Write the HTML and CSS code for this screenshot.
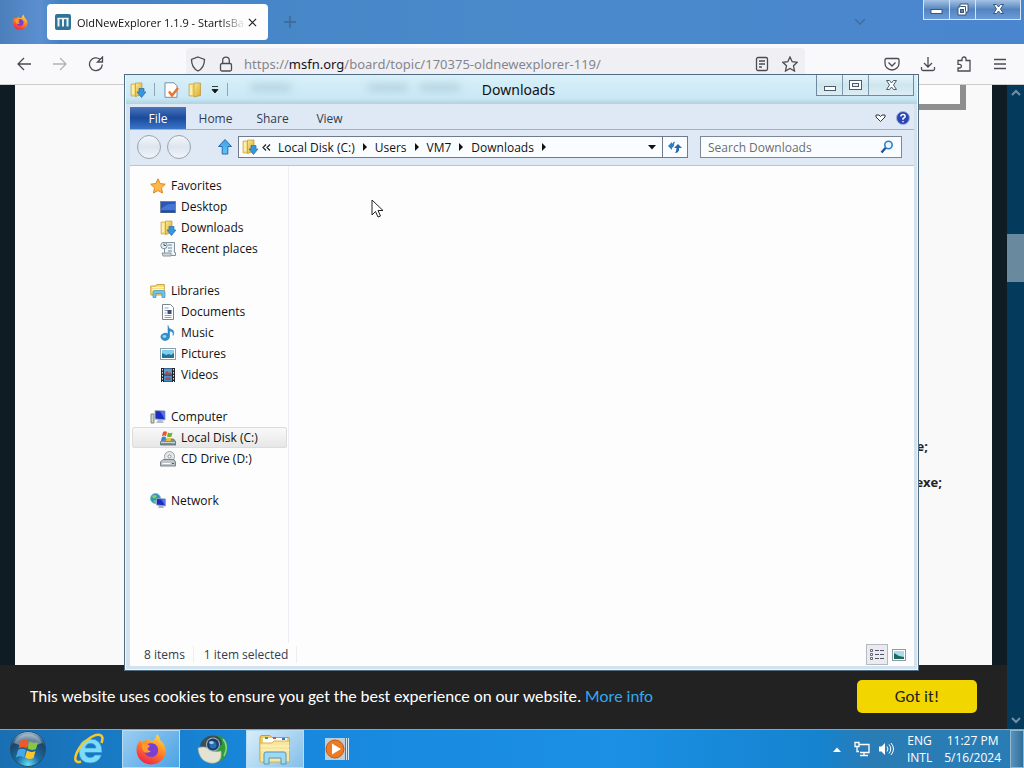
FILE: index.html
```
<!DOCTYPE html>
<html lang="en">
<head>
    <meta charset="UTF-8">
    <meta name="viewport" content="width=device-width, initial-scale=1.0">
    <title>Downloads</title>
    <link rel="stylesheet" href="styles.css">
</head>

<body>

    <!-- shared icons -->
    <svg class="defs" width="0" height="0" aria-hidden="true">
        <defs>
            <linearGradient id="gold" x1="0" y1="0" x2="1" y2="1">
                <stop offset="0" stop-color="#fbe98a"/>
                <stop offset="1" stop-color="#dba62c"/>
            </linearGradient>
            <linearGradient id="sky" x1="0" y1="0" x2="0" y2="1">
                <stop offset="0" stop-color="#3f9fe8"/>
                <stop offset="1" stop-color="#5cc8f8"/>
            </linearGradient>
            <linearGradient id="fox" x1="0.8" y1="0" x2="0.3" y2="1">
                <stop offset="0" stop-color="#ffe14a"/>
                <stop offset="0.45" stop-color="#ff8a24"/>
                <stop offset="1" stop-color="#f0204c"/>
            </linearGradient>
            <radialGradient id="orb" cx="0.5" cy="0.95" r="0.95">
                <stop offset="0" stop-color="#5fe0f5"/>
                <stop offset="0.35" stop-color="#1b6ea3"/>
                <stop offset="0.75" stop-color="#1b4468"/>
                <stop offset="1" stop-color="#a9c4d6"/>
            </radialGradient>
            <symbol id="i-folder" viewBox="0 0 16 16">
                <path d="M2 2h6l1 12H2z" fill="#f5da78" stroke="#c99c2e" stroke-width=".6"/>
                <path d="M7 1h6.500v12.500L7 15z" fill="url(#gold)" stroke="#b98a22" stroke-width=".6"/>
                <path d="M4 3v10" stroke="#fffbe0" stroke-width="1.200"/>
            </symbol>
            <symbol id="i-downloads" viewBox="0 0 16 16">
                <path d="M1 2h5l1 12H1z" fill="#f5da78" stroke="#c99c2e" stroke-width=".6"/>
                <path d="M5.500 1H12v11.500L5.500 14.500z" fill="url(#gold)" stroke="#b98a22" stroke-width=".6"/>
                <path d="M3 3v9" stroke="#fffbe0" stroke-width="1.200"/>
                <path d="M9 6.500h5V10h2l-4.500 5.500L7 10h2z" fill="#3299de" stroke="#2a6aad" stroke-width=".7"/>
            </symbol>
            <symbol id="i-firefox" viewBox="0 0 32 32">
                <path d="M22 1c2 2 3 4 3 6 4 3 6 7 5.500 12C30 26 24 31.500 16 31.500S1.500 25 1.500 17c0-4 1.500-7.500 4-10l1 3c1.500-1.500 3-2.500 5-3l1-2c1 2 3 3 5 3 2-1 4-4 4.500-7z" fill="url(#fox)"/>
                <path d="M11 12c4-3 10-2 11.500 2 2 5-1 10-6 10-4 0-7-3-7-6 2 1 4 1 6 0-3 0-4-1-5-2l3-2z" fill="#7a3fd0"/>
                <path d="M7 10c3 0 6 1 8 3l-2 2c-1 1 0 3 3 3-2 2-5 2-7 1-2-3-3-6-2-9z" fill="#ff9a2a"/>
            </symbol>
        </defs>
    </svg>

    <main class="browser">
        <header class="tabs">
            <svg class="pinned" viewBox="0 0 32 32" width="16" height="16"><use href="#i-firefox"/></svg>
            <div class="tab">
                <svg viewBox="0 0 16 16" width="16" height="16">
                    <rect width="16" height="16" rx="2" fill="#2f7396"/>
                    <path d="M3.500 12.500V4M8 12.500V4M12.500 12.500V4" fill="none" stroke="#e8f4f9" stroke-width="2"/>
                    <path d="M2.500 4.500h11" stroke="#e8f4f9" stroke-width="1.500"/>
                </svg>
                <span class="tab-title">OldNewExplorer 1.1.9 - StartIsBa</span>
                <button class="icon-button" aria-label="Close tab">
                    <svg viewBox="0 0 10 10" width="9" height="9"><path d="M1 1l8 8M9 1L1 9" stroke="#222" stroke-width="1.300"/></svg>
                </button>
            </div>
            <button class="icon-button new-tab" aria-label="New tab">
                <svg viewBox="0 0 14 14" width="14" height="14"><path d="M7 1v12M1 7h12" stroke="#3d6690" stroke-width="1.300"/></svg>
            </button>
            <button class="icon-button all-tabs" aria-label="List all tabs">
                <svg viewBox="0 0 12 8" width="12" height="8"><path d="M1 1l5 5 5-5" fill="none" stroke="#4170a3" stroke-width="1.600"/></svg>
            </button>
            <div class="controls browser-controls">
                <button aria-label="Minimize"><svg viewBox="0 0 13 13" width="13" height="13"><rect x="1" y="6.500" width="11" height="4" fill="#fff" stroke="#39557c"/></svg></button>
                <button aria-label="Restore"><svg viewBox="0 0 13 13" width="13" height="13"><path d="M4 1h8v8h-2v3H2V4h2z" fill="#fff" stroke="#39557c"/><path d="M4.500 3.500h5v5" fill="none" stroke="#39557c"/><rect x="4.500" y="6.500" width="3" height="3" fill="#5b86bb" stroke="#39557c"/></svg></button>
                <button class="wide" aria-label="Close"><svg viewBox="0 0 13 13" width="13" height="13"><path d="M1.500 1.500h3l2 2.500 2-2.500h3L8.500 6l3 4.500h-3l-2-2.500-2 2.500h-3l3-4.500z" fill="#fff" stroke="#39557c"/></svg></button>
            </div>
        </header>

        <nav class="toolbar">
            <button class="icon-button" aria-label="Back"><svg viewBox="0 0 16 16" width="16" height="16"><path d="M15 8H2M8 2L2 8l6 6"/></svg></button>
            <button class="icon-button faded" aria-label="Forward"><svg viewBox="0 0 16 16" width="16" height="16"><path d="M1 8h13M8 2l6 6-6 6"/></svg></button>
            <button class="icon-button" aria-label="Reload"><svg viewBox="0 0 16 16" width="16" height="16"><path d="M14.300 8.500A6.400 6.400 0 1 1 12 3.300M14.500 1v5H9.500z"/></svg></button>
            <div class="url-bar">
                <svg viewBox="0 0 16 16" width="16" height="16"><path d="M8 1l6.500 2.500C14.500 9 12 13 8 15 4 13 1.500 9 1.500 3.500z"/></svg>
                <svg viewBox="0 0 16 16" width="16" height="16"><rect x="2.500" y="7.500" width="11" height="7.500" rx="1.500"/><path d="M4.700 7V4.500a3.300 3.300 0 0 1 6.600 0V7"/></svg>
                <span class="url">https://<b>msfn.org</b>/board/topic/170375-oldnewexplorer-119/</span>
                <button class="icon-button" aria-label="Reader view"><svg viewBox="0 0 16 16" width="16" height="16"><rect x="2.500" y="1.500" width="11" height="13" rx="1.500"/><path d="M5 5h6M5 8h6M5 11h3"/></svg></button>
                <button class="icon-button" aria-label="Bookmark"><svg viewBox="0 0 16 16" width="16" height="16"><path d="M8 1l2.200 4.700 5 .6-3.700 3.500 1 5.200L8 12.500 3.500 15l1-5.200L.8 6.300l5-.6z"/></svg></button>
            </div>
            <div class="tools">
                <button class="icon-button" aria-label="Pocket"><svg viewBox="0 0 16 16" width="16" height="16"><path d="M2.500 2.500h11q1.500 0 1.500 1.500v3.500a7 6.500 0 0 1-14 0V4q0-1.500 1.500-1.500zM4.500 6.500L8 10l3.500-3.500"/></svg></button>
                <button class="icon-button" aria-label="Downloads"><svg viewBox="0 0 16 16" width="16" height="16"><path d="M8 1v9.500M4 7l4 4 4-4M1.500 11v2q0 1.500 1.500 1.500h10q1.500 0 1.500-1.500v-2"/></svg></button>
                <button class="icon-button" aria-label="Extensions"><svg viewBox="0 0 16 16" width="16" height="16"><path d="M2 4.500h4V3a2 2 0 0 1 4 0v1.500h4v10.500H2v-3h1.500a1.800 1.800 0 0 0 0-3.700H2z"/></svg></button>
                <button class="icon-button" aria-label="Menu"><svg viewBox="0 0 16 16" width="16" height="16"><path d="M2 3.500h12M2 8h12M2 12.500h12"/></svg></button>
            </div>
        </nav>

        <div class="page">
            <div class="page-main">
                <article class="post">
                    <div class="quote-box"></div>
                    <p>e;</p>
                    <p class="second">exe;</p>
                </article>
                <div class="cookies">
                    <p>This website uses cookies to ensure you get the best experience on our website. <a href="#">More info</a></p>
                    <button>Got it!</button>
                </div>
            </div>
            <div class="scrollbar">
                <svg viewBox="0 0 10 8" width="10" height="8"><path d="M1 6l4-4 4 4" fill="none" stroke="#6f90a5" stroke-width="2"/></svg>
                <div class="thumb"></div>
                <svg viewBox="0 0 10 8" width="10" height="8"><path d="M1 2l4 4 4-4" fill="none" stroke="#6f90a5" stroke-width="2"/></svg>
            </div>
        </div>
    </main>

    <section class="explorer">
        <header class="title-bar">
            <div class="quick">
                <svg width="16" height="16"><use href="#i-downloads"/></svg>
                <i class="bar"></i>
                <button class="icon-button" aria-label="Properties">
                    <svg viewBox="0 0 16 16" width="16" height="16"><path d="M2 .8h9l3 3v11.500H2z" fill="#fff" stroke="#7d8ba8"/><path d="M6 9.500l3 4L15 6" fill="none" stroke="#e8762d" stroke-width="2.500"/></svg>
                </button>
                <button class="icon-button" aria-label="New folder"><svg width="16" height="16"><use href="#i-folder"/></svg></button>
                <button class="icon-button" aria-label="Customize"><svg viewBox="0 0 8 8" width="8" height="8"><path d="M1 .5h6M1 3.500h6L4 7z" fill="#111" stroke="#111" stroke-width=".8"/></svg></button>
                <i class="bar"></i>
            </div>
            <div class="smudges"><i></i><i></i><i></i></div>
            <h1>Downloads</h1>
            <div class="controls">
                <button aria-label="Minimize"><svg viewBox="0 0 13 13" width="13" height="13"><rect x="1.500" y="7.500" width="11" height="4" fill="#fff" stroke="#4d5c6c"/></svg></button>
                <button aria-label="Maximize"><svg viewBox="0 0 13 13" width="13" height="13"><rect x=".5" y="1.500" width="12" height="9" fill="#fff" stroke="#4d5c6c"/><rect x="3.500" y="4.500" width="6" height="3" fill="#e6f0f5" stroke="#4d5c6c"/></svg></button>
                <button class="wide" aria-label="Close"><svg viewBox="0 0 13 13" width="13" height="13"><path d="M1.500 1.500h3l2 2.500 2-2.500h3L8.500 6l3 4.500h-3l-2-2.500-2 2.500h-3l3-4.500z" fill="#fff" stroke="#4d5c6c"/></svg></button>
            </div>
        </header>

        <div class="ribbon">
            <button class="file">File</button>
            <button>Home</button>
            <button>Share</button>
            <button>View</button>
            <div class="ribbon-end">
                <button class="icon-button" aria-label="Expand ribbon"><svg viewBox="0 0 11 9" width="11" height="9"><path d="M1 1h3l1.500 1.500L7 1h3v2L5.500 7.500 1 3z" fill="#fff" stroke="#333"/></svg></button>
                <button class="icon-button" aria-label="Help"><svg viewBox="0 0 14 14" width="14" height="14"><circle cx="7" cy="7" r="6.500" fill="#2b46b4" stroke="#9fb0e0"/><path d="M4.800 5.500Q5 3.500 7 3.500t2.200 1.700Q9.200 6.500 7 7.500v1.200M7 10v1.300" fill="none" stroke="#fff" stroke-width="1.500"/></svg></button>
            </div>
        </div>

        <div class="address-row">
            <button class="round" aria-label="Back"></button>
            <button class="round" aria-label="Forward"></button>
            <button class="icon-button up" aria-label="Up">
                <svg viewBox="0 0 16 18" width="16" height="18"><path d="M8 1.500l6.500 7h-3.700V16H5.200V8.500H1.500z" fill="url(#sky)" stroke="#2767b5"/></svg>
            </button>
            <div class="address">
                <svg width="16" height="16"><use href="#i-downloads"/></svg>
                <svg class="chevrons" viewBox="0 0 9 7" width="9" height="7"><path d="M4 .5l-3 3 3 3M8 .5l-3 3 3 3" fill="none" stroke="#222" stroke-width="1.200"/></svg>
                <a href="#">Local Disk (C:)</a><i class="arrow"></i>
                <a href="#">Users</a><i class="arrow"></i>
                <a href="#">VM7</a><i class="arrow"></i>
                <a href="#">Downloads</a><i class="arrow"></i>
                <button class="drop" aria-label="Previous locations"><svg viewBox="0 0 8 5" width="8" height="5"><path d="M0 0h8L4 4.500z" fill="#111"/></svg></button>
                <button class="refresh" aria-label="Refresh">
                    <svg viewBox="0 0 16 14" width="16" height="14"><path d="M1 6l4-4v2q1-2.500 3-2.500-1 2-1 4.500l-2 2v2z" fill="#2e7fc0"/><path d="M15 8l-4-4-4 4h2.500q0 3-1.500 5 3 0 4-2.500V8z" fill="#2766a8"/></svg>
                </button>
            </div>
            <div class="search">
                <input type="text" placeholder="Search Downloads" aria-label="Search Downloads">
                <svg viewBox="0 0 14 14" width="14" height="14"><circle cx="8.500" cy="5" r="3.700" fill="#eaf6ff" stroke="#2f7fc2" stroke-width="1.600"/><path d="M5.500 8L1.500 12.500" stroke="#27528f" stroke-width="2.400"/></svg>
            </div>
        </div>

        <div class="panes">
            <nav class="tree">
                <ul>
                    <li class="top"><svg viewBox="0 0 16 16" width="16" height="16"><path d="M8 .8l2.200 4.800 5.100.6-3.800 3.600 1 5.200L8 12.500l-4.500 2.500 1-5.200L.7 6.200l5.100-.6z" fill="#ffb84a" stroke="#d98722"/></svg>Favorites</li>
                    <li><svg viewBox="0 0 16 16" width="16" height="16"><rect x=".5" y="2.500" width="15" height="11" fill="#2c55b8" stroke="#6f8399"/><path d="M1 10q6-6 14-5v6H1z" fill="#4477d4"/><path d="M1 13h14" stroke="#183a80"/></svg>Desktop</li>
                    <li><svg width="16" height="16"><use href="#i-downloads"/></svg>Downloads</li>
                    <li><svg viewBox="0 0 16 16" width="16" height="16"><path d="M4.500 1.500h10v10h1v3h-11z" fill="#f0f3f5" stroke="#84909a"/><path d="M8 4h4M8 7h4M8 10h4" stroke="#5e8bb0"/><circle cx="4" cy="4.500" r="3.200" fill="#e5eef3" stroke="#7e929e"/><path d="M4 2.500v2h2" fill="none" stroke="#456"/><path d="M2 12h9v3H3z" fill="#cdd5da" stroke="#8d989f"/></svg>Recent places</li>
                </ul>
                <ul>
                    <li class="top"><svg viewBox="0 0 16 16" width="16" height="16"><path d="M.8 3h5l1-1.500h7.500V12H.8z" fill="#f6dd7f" stroke="#cda43a"/><path d="M2 4.500h12M2 6.500h12" stroke="#fff5c2"/><path d="M3 14.500V9.500Q3 7.500 5 7.500h8q2 0 2 2v5h-3v-4H6v4z" fill="#70c3ea" stroke="#3b94c4" stroke-width=".7"/></svg>Libraries</li>
                    <li><svg viewBox="0 0 16 16" width="16" height="16"><path d="M2.500.5h8l3 3v12h-11z" fill="#fff" stroke="#7d858c"/><path d="M4.500 4h4M4.500 6.500h7M4.500 9h2M4.500 11.500h7M4.500 13.500h7" stroke="#91a2b5"/><rect x="7.500" y="6" width="4" height="4" fill="#3b5079"/></svg>Documents</li>
                    <li><svg viewBox="0 0 16 16" width="16" height="16"><path d="M8 .5q0 3 3.500 4t1.500 6q1-4-3.500-4.500V12a4.300 3.700 0 1 1-1.500-3V.5z" fill="#2c90cf" stroke="#1d6ea8" stroke-width=".5"/><ellipse cx="4.500" cy="11.500" rx="2" ry="1.400" fill="#8fd3f5"/></svg>Music</li>
                    <li><svg viewBox="0 0 16 16" width="16" height="16"><rect x=".5" y="2.500" width="15" height="11" fill="#fff" stroke="#8da0ad"/><rect x="2" y="4" width="12" height="8" fill="#7fcdf0"/><path d="M2 12V7l4 2 3-1 2 1 3-2v5z" fill="#237392"/></svg>Pictures</li>
                    <li><svg viewBox="0 0 16 16" width="16" height="16"><rect x="1" y="1" width="14" height="14" fill="#20262c"/><rect x="4" y="1.500" width="8" height="6" fill="#5a9cd6"/><rect x="4" y="8.500" width="8" height="6" fill="#4a8ecc"/><path d="M5 6l2-2 2 2 2-1v2.500H5zM5 12l3-2 3 2v1H5z" fill="#a84a45"/><path d="M2.500 2v13M13.500 2v13" stroke="#e6eaee" stroke-dasharray="1.500 1.500"/></svg>Videos</li>
                </ul>
                <ul>
                    <li class="top"><svg viewBox="0 0 16 16" width="16" height="16"><path d="M1 5h3v9H1z" fill="#c9d4c4" stroke="#7c8a7d"/><path d="M5 1.500l10 .5v9l-10-1z" fill="#1c2ec0" stroke="#a5aec0"/><path d="M10 2l5 .5v8z" fill="#5573ea"/><path d="M8 11h4l2 3H6z" fill="#b4bcc6"/></svg>Computer</li>
                    <li class="selected"><svg viewBox="0 0 16 16" width="16" height="16"><path d="M2.500 9h11l2.500 3v3H.5v-3z" fill="#7e9199" stroke="#55656c" stroke-width=".7"/><path d="M1 12.500h14" stroke="#c8d4d8"/><path d="M3 2q2-1.500 4 0L6 6Q4.500 5 2 6z" fill="#e9552c"/><path d="M8 2.500q2 1.500 4.500 0l-1 4q-2.500 1-4.500 0z" fill="#69b235"/><path d="M2 7q2-1 4 0L5 10.500H1z" fill="#3a86d6"/><path d="M7 7.500q2 1.500 4.500 0l-1 3.500H6z" fill="#f3c22f"/><path d="M12 13.500h2" stroke="#42e242"/></svg>Local Disk (C:)</li>
                    <li><svg viewBox="0 0 16 16" width="16" height="16"><circle cx="9.500" cy="5.500" r="5" fill="#e4e8eb" stroke="#9ba2a8"/><circle cx="9.500" cy="5.500" r="1.500" fill="#fff" stroke="#8b9298"/><path d="M3 8.500h11l1.500 2.500v4H.5v-4z" fill="#bfc4c8" stroke="#7a8187"/><path d="M2.500 12.500h8" stroke="#fff"/><path d="M12 12.500h2" stroke="#555"/></svg>CD Drive (D:)</li>
                </ul>
                <ul>
                    <li class="top"><svg viewBox="0 0 16 16" width="16" height="16"><circle cx="5.500" cy="5.500" r="5" fill="#2d92c2" stroke="#83bbd0"/><path d="M2 3q3-2 5 0-1 3-4 2.500zM3 7l4 1-2 2.500z" fill="#79cf69"/><path d="M6.500 5.500l9 .5v7l-9-1z" fill="#1c2ec0" stroke="#93a7c4"/><path d="M11 6l4 .5v6z" fill="#5573ea"/><path d="M9 13h4l1 2H8z" fill="#a9b2bc"/></svg>Network</li>
                </ul>
            </nav>
            <div class="files"></div>
        </div>

        <footer class="status">
            <span>8 items</span>
            <span>1 item selected</span>
            <div class="views">
                <button class="active" aria-label="Details"><svg viewBox="0 0 16 14" width="16" height="14"><path d="M1.500 1.500h2v2h-2zM1.500 5.500h2v2h-2zM1.500 9.500h2v2h-2z" fill="#fff" stroke="#667"/><path d="M6 2.500h4M11 2.500h4M6 6.500h4M11 6.500h4M6 10.500h4M11 10.500h4" stroke="#556"/></svg></button>
                <button aria-label="Large icons"><svg viewBox="0 0 14 12" width="14" height="12"><rect x=".5" y=".5" width="13" height="11" fill="#fff" stroke="#8d9aa5"/><rect x="2" y="2" width="10" height="8" fill="#a6dcec"/><path d="M2 10V4l5 3 5 1v2z" fill="#1d6a5e"/></svg></button>
            </div>
        </footer>
    </section>

    <svg class="cursor" viewBox="0 0 13 20" width="13" height="20"><path d="M1 1v15l3.500-3.500L7 18l2.500-1L7 11.500h5z" fill="#fff" stroke="#222"/></svg>

    <footer class="taskbar">
        <button class="start" aria-label="Start">
            <svg viewBox="0 0 38 38" width="38" height="38">
                <circle cx="19" cy="19" r="17.500" fill="url(#orb)" stroke="#244e70"/>
                <path d="M5 13a15 14 0 0 1 28 0q-14 7-28 0z" fill="#fff" opacity=".35"/>
                <path d="M11.500 11q4-2.500 8 0l-2 7.500q-4-2.500-8 0z" fill="#ee5a27"/>
                <path d="M20.500 11.500q4 2.500 8.500.5l-2 7q-4.500 2-8.500-.5z" fill="#8cc63e"/>
                <path d="M9 20q4-2.500 8 0l-2 7.500q-4-2.500-8 0z" fill="#49a7e8"/>
                <path d="M18 20.500q4 2.500 8.500.5l-2 7q-4.500 2-8.500-.5z" fill="#fdc62c"/>
            </svg>
        </button>
        <button aria-label="Internet Explorer">
            <svg viewBox="0 0 32 32" width="32" height="32">
                <path d="M29 19.500H12q.5 5 5.500 5 3 0 4.500-2.500h6.500Q25.500 30 17.500 30 6 30 6 18T17.500 6 29 19.500zM12.300 15H23q-.5-4.500-5.300-4.500T12.300 15z" fill="#7edcfb" stroke="#2b93d8" stroke-width=".7"/>
                <path d="M28.500 10Q31 3 27 2C20 .5 7 11 3.500 20.500 1 27 2.500 30.500 8 28.500" fill="none" stroke="#f7c92d" stroke-width="2.500"/>
            </svg>
        </button>
        <button class="running" aria-label="Firefox"><svg viewBox="0 0 32 32" width="32" height="32"><use href="#i-firefox"/></svg></button>
        <button aria-label="K-Meleon">
            <svg viewBox="0 0 32 32" width="32" height="32">
                <path d="M14 3Q28 0 31 13q0 13-11 17z" fill="#2f9a3c"/>
                <path d="M26 6q6 7 1 17" fill="none" stroke="#8fd48a" stroke-width="1.500"/>
                <path d="M3 13Q5 3 16 2.500q9 0 9 9l-9 6z" fill="#3d4f55"/>
                <path d="M1 15q8-3 12 2 5 3 11 1 1 7-2 10-4 3-9 2Q2 28 1 15z" fill="#e4e2d2" stroke="#a8ab98" stroke-width=".6"/>
                <circle cx="16" cy="11.500" r="7" fill="#9fb4bd"/>
                <circle cx="16" cy="11.500" r="6" fill="#163f70"/>
                <circle cx="16" cy="12" r="3.500" fill="#2c6fae"/>
                <ellipse cx="14.500" cy="9.500" rx="2.400" ry="1.600" fill="#a3cdea"/>
            </svg>
        </button>
        <button class="running current" aria-label="Windows Explorer">
            <svg viewBox="0 0 32 32" width="32" height="32">
                <path d="M1 4.500q0-2 2-2h8l2 2h16q1.500 0 1.500 2V28H1z" fill="#f0ce68" stroke="#c99b35"/>
                <path d="M4 5h24v6H4z" fill="#fff"/>
                <path d="M6 5h3" stroke="#46a246" stroke-width="2"/><path d="M14 5h3" stroke="#d8503f" stroke-width="2"/><path d="M23 6h3" stroke="#3f75c4" stroke-width="2"/>
                <path d="M1 10h12l2-2h15.500v21H1z" fill="#f8e69c" stroke="#d8b451"/>
                <path d="M1.500 17h29M1.500 13h29" stroke="#fdf5cb"/>
                <path d="M5 31V21q0-2 2-2h18q2 0 2 2v10h-5v-6H10v6z" fill="#9adaf2" stroke="#5794b8"/>
            </svg>
        </button>
        <button aria-label="Windows Media Player">
            <svg viewBox="0 0 32 32" width="32" height="32">
                <rect x="4" y="5" width="20" height="22" fill="#b9cfe0"/>
                <path d="M25.500 5v22M27.500 5v22" stroke="#d4e7f5"/>
                <circle cx="14" cy="16" r="9" fill="#ee7a22" stroke="#c9570f"/>
                <path d="M11 10.500l9 5.500-9 5.500z" fill="#fff"/>
            </svg>
        </button>
        <div class="tray">
            <svg viewBox="0 0 8 5" width="8" height="5"><path d="M0 5l4-4.500L8 5z" fill="#fff"/></svg>
            <svg viewBox="0 0 16 16" width="16" height="16"><path d="M5 3.500h10v8H6M10 12v2.500M6 14.500h8" fill="none" stroke="#fff" stroke-width="1.300"/><path d="M1 1.500h4v4H1zM3 6v4.500h2" fill="none" stroke="#fff" stroke-width="1.300"/></svg>
            <svg viewBox="0 0 16 16" width="16" height="16"><path d="M1 5.500h2.500L7 2v12l-3.500-3.500H1z" fill="#fff"/><path d="M9 5.500q2 2.500 0 5M11 3.500q3.500 4.500 0 9M13 2q5 6 0 12" fill="none" stroke="#fff"/></svg>
            <div class="lang">ENG<br>INTL</div>
            <div class="clock">11:27 PM<br>5/16/2024</div>
        </div>
        <button class="show-desktop" aria-label="Show desktop"></button>
    </footer>

</body>
</html>
```
FILE: styles.css
```
* {
    box-sizing: border-box;
}

body {
    margin: 0;
    height: 100vh;
    display: flex;
    flex-direction: column;
    overflow: hidden;
    position: relative;
    font-family: "Open Sans", "Noto Sans", sans-serif;
    font-size: 12px;
    color: #111;
    background-color: #0f1c24;
}

button {
    margin: 0;
    padding: 0;
    border: none;
    background: none;
    font: inherit;
    color: inherit;
}

svg {
    display: block;
    flex: none;
}

a {
    color: inherit;
    text-decoration: none;
}

.defs {
    position: absolute;
}

.icon-button {
    display: flex;
    align-items: center;
    justify-content: center;
}

/* browser window */
.browser {
    flex: 1;
    min-height: 0;
    display: flex;
    flex-direction: column;
}

.tabs {
    height: 44px;
    flex: none;
    display: flex;
    align-items: center;
    background: linear-gradient(90deg, #4a7fbb 0, #5b8fd0 40px, #4482c4 60px, #4a8acb 50%, #4a86cf 100%);
}

.pinned {
    margin-left: 12px;
}

.tab {
    width: 221px;
    height: 36px;
    margin-left: 19px;
    padding: 0 11px 0 8px;
    display: flex;
    align-items: center;
    gap: 6px;
    background-color: #fdfdfe;
    border-radius: 4px;
}

.tab-title {
    flex: 1;
    min-width: 0;
    margin-right: -4px;
    overflow: hidden;
    white-space: nowrap;
    font-size: 11px;
    -webkit-mask-image: linear-gradient(90deg, #000 85%, transparent);
    mask-image: linear-gradient(90deg, #000 85%, transparent);
}

.new-tab {
    margin-left: 15px;
}

.all-tabs {
    margin-left: auto;
    margin-right: 57px;
}

.controls {
    align-self: flex-start;
    display: flex;
    height: 21px;
    border: 1px solid #6d8a9e;
    border-top: none;
    background: linear-gradient(#e8f4f9, #cfe6ef 50%, #dcedf4);
}

.controls button {
    width: 26px;
    display: flex;
    align-items: center;
    justify-content: center;
    border-right: 1px solid #7c9aad;
}

.controls .wide {
    width: 44px;
    border-right: none;
}

.browser-controls {
    height: 20px;
    margin-right: 3px;
    border-color: #d5e4f4;
    background: linear-gradient(#a5c2e3, #5384c0 50%, #6c9cd6);
}

.browser-controls button {
    border-color: #d5e4f4;
}

.toolbar {
    height: 41px;
    flex: none;
    display: flex;
    align-items: center;
    padding: 0 16px;
    gap: 20px;
    background-color: #f9f9fb;
    border-bottom: 1px solid #ccc;
}

.toolbar svg {
    fill: none;
    stroke: #4b4b52;
    stroke-width: 1.3;
}

.toolbar .faded {
    opacity: 0.4;
}

.url-bar {
    flex: 1;
    height: 32px;
    margin-left: 62px;
    padding: 0 7px 0 4px;
    display: flex;
    align-items: center;
    gap: 12px;
    background-color: #f0f0f4;
    border-radius: 4px;
}

.url {
    flex: 1;
    margin-left: -2px;
    font-family: "Noto Sans", sans-serif;
    font-size: 13px;
    color: #85858c;
}

.url b {
    font-weight: normal;
    color: #15141a;
}

.tools {
    display: flex;
    gap: 20px;
    margin-left: 59px;
}

.page {
    flex: 1;
    min-height: 0;
    display: flex;
}

.page-main {
    flex: 1;
    display: flex;
    flex-direction: column;
}

.post {
    flex: 1;
    margin: 0 15px 0 15px;
    padding-right: 26px;
    background-color: #f9f9f9;
    overflow: hidden;
    font-size: 13px;
    font-weight: bold;
    line-height: 18px;
    text-align: right;
    color: #222;
}

.post p {
    margin: 0 38px 18px 0;
}

.post .second {
    margin-right: 24px;
}

.quote-box {
    height: 25px;
    margin: 0 0 327px 200px;
    background-color: #fdfdfd;
    border: 6px solid #8f8f8f;
    border-top: none;
}

.cookies {
    height: 64px;
    flex: none;
    padding: 0 30px 2px;
    display: flex;
    align-items: center;
    justify-content: space-between;
    background-color: #222;
    color: #fff;
    font-family: Carlito, Lato, sans-serif;
    font-size: 17px;
}

.cookies p {
    margin: 0;
}

.cookies a {
    color: #31a8f0;
}

.cookies button {
    width: 120px;
    height: 33px;
    border-radius: 5px;
    background-color: #f1d600;
    color: #222;
}

.scrollbar {
    width: 17px;
    padding: 4px 0 5px;
    display: flex;
    flex-direction: column;
    align-items: center;
    background-color: #043a5c;
}

.thumb {
    width: 100%;
    height: 48px;
    margin-top: 137px;
    margin-bottom: auto;
    background-color: #698a9e;
}

/* explorer window */
.explorer {
    position: absolute;
    left: 124px;
    top: 74px;
    right: 105px;
    bottom: 97px;
    padding: 0 4px 4px 5px;
    display: flex;
    flex-direction: column;
    border: 1px solid #506c82;
    background-color: #d3e2ec;
    box-shadow: inset 0 0 0 1px #eef8fc;
}

.title-bar {
    height: 29px;
    flex: none;
    display: flex;
    justify-content: space-between;
    position: relative;
    margin: 0 -3px 0 -4px;
    padding: 0 3px;
    background: linear-gradient(#d9f0f9, #c9e8f5 80%, #b3d2de);
}

.title-bar h1 {
    position: absolute;
    left: 0;
    right: 6px;
    top: 5px;
    margin: 0;
    font-family: "Noto Sans", sans-serif;
    font-size: 14px;
    font-weight: normal;
    line-height: 20px;
    text-align: center;
}

.quick {
    display: flex;
    align-items: center;
    gap: 8px;
    padding-left: 1px;
}

.bar {
    width: 1px;
    height: 13px;
    background-color: #8fa7b5;
}

.smudges {
    position: absolute;
    left: 125px;
    top: 10px;
    display: flex;
    gap: 12px;
    filter: blur(4px);
}

.smudges i {
    width: 40px;
    height: 5px;
    background-color: #a5c6d4;
}

.smudges i:first-child {
    margin-right: 65px;
}

.title-bar .controls {
    position: relative;
}

.ribbon {
    height: 26px;
    flex: none;
    display: flex;
    padding-top: 3px;
    background-color: #dfe9f6;
    border: solid #8fb3ea;
    border-width: 0 0 1px;
    color: #333c4e;
}

.ribbon button {
    width: 57px;
}

.ribbon .file {
    width: 56px;
    margin-right: 1px;
    color: #fff;
    background: linear-gradient(#4a74bb, #1b4a9c 50%, #3a76c8);
}

.ribbon-end {
    margin-left: auto;
    padding-right: 4px;
    display: flex;
    gap: 10px;
}

.ribbon-end .icon-button {
    width: auto;
}

.address-row {
    height: 36px;
    flex: none;
    padding: 0 12px 1px 7px;
    display: flex;
    align-items: center;
    background-color: #dfe9f5;
    border-bottom: 1px solid #b0c8dc;
}

.round {
    width: 24px;
    height: 24px;
    margin-right: 6px;
    border: 1px solid #9aa3ad;
    border-radius: 50%;
    background: linear-gradient(#f4f7fb, #dde5ef 50%, #f1f5fa);
}

.up {
    margin: 0 5px 0 20px;
}

.address {
    flex: 1;
    height: 22px;
    padding-left: 3px;
    display: flex;
    align-items: center;
    background-color: #fafdff;
    border: 1px solid #6f7a8c;
}

.chevrons {
    margin: 0 7px 0 4px;
}

.arrow {
    margin: 0 8px;
    border: 4px solid transparent;
    border-left-color: #111;
    border-right: none;
}

.drop {
    margin-left: auto;
    padding: 0 6px;
}

.refresh {
    height: 100%;
    padding: 0 4px;
    border-left: 1px solid #6f7a8c;
}

.search {
    width: 202px;
    height: 22px;
    margin-left: 12px;
    padding: 0 7px;
    display: flex;
    align-items: center;
    background-color: #fafdff;
    border: 1px solid #7f8795;
}

.search input {
    flex: 1;
    min-width: 0;
    padding: 0;
    border: none;
    background: none;
    font: inherit;
}

.search input::placeholder {
    color: #6d6d6d;
}

.panes {
    flex: 1;
    min-height: 0;
    display: flex;
    background-color: #fdfdfe;
}

.tree {
    width: 159px;
    padding-top: 9px;
    border-right: 1px solid #eceef3;
}

.tree ul {
    margin: 0 0 21px;
    padding: 0;
    list-style: none;
}

.tree li {
    height: 21px;
    margin: 0 1px 0 2px;
    padding-left: 28px;
    display: flex;
    align-items: center;
    gap: 5px;
    white-space: nowrap;
}

.tree .top {
    padding-left: 18px;
}

.tree .selected {
    background: linear-gradient(#fafafa, #e6e6e6);
    border-radius: 3px;
    box-shadow: inset 0 0 0 1px #dcdcdc;
}

.status {
    height: 23px;
    flex: none;
    display: flex;
    align-items: center;
    padding: 0 4px 0 14px;
    background-color: #fdfdfe;
    color: #333c4e;
}

.status span {
    padding-right: 8px;
    margin-right: 10px;
    border-right: 1px solid #eceef3;
}

.views {
    margin-left: auto;
    display: flex;
}

.views button {
    width: 22px;
    height: 21px;
    display: flex;
    align-items: center;
    justify-content: center;
}

.views .active {
    background-color: #e9ebf0;
    border: 1px solid #b5b9c2;
}

.cursor {
    position: absolute;
    left: 371px;
    top: 199px;
}

/* taskbar */
.taskbar {
    height: 39px;
    flex: none;
    display: flex;
    align-items: center;
    background: linear-gradient(90deg, #1a6fb2, #1787dc 25%, #1b90e4 60%, #1583cf 80%, #2a7cb5 85%);
    border-top: 1px solid #5fb2e8;
    color: #fff;
}

.taskbar button {
    width: 58px;
    height: 38px;
    margin-right: 4px;
    display: flex;
    align-items: center;
    justify-content: center;
}

.taskbar .start {
    width: 56px;
}

.taskbar .running {
    border: 1px solid #b8dcf5;
    background: linear-gradient(135deg, #9ccdf2, #4ba3e4);
}

.taskbar .current {
    background: linear-gradient(135deg, #d9eefb, #84bfe8);
}

.tray {
    margin-left: auto;
    display: flex;
    align-items: center;
    gap: 8px;
    line-height: 17px;
    text-align: center;
}

.tray svg:first-child {
    margin-right: 5px;
}

.lang {
    margin: 0 4px 0 5px;
}

.taskbar .show-desktop {
    width: 14px;
    margin: 0 0 0 9px;
    border: 1px solid #8fb8d3;
    background: linear-gradient(90deg, #5a93bb, #2f6e9a);
}
```
